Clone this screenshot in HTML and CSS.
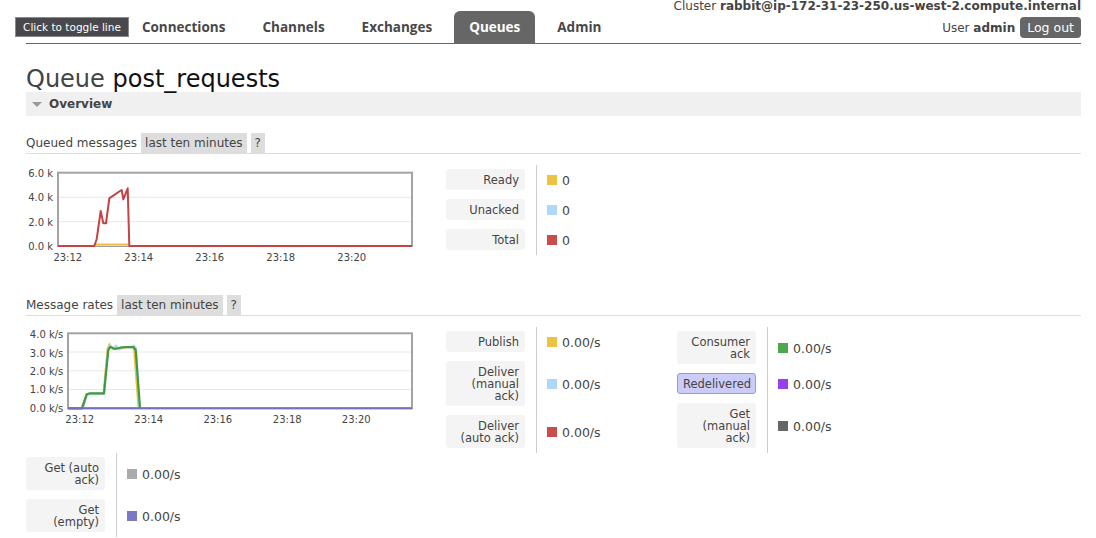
FILE: index.html
```html
<!DOCTYPE html>
<html>
<head>
<meta charset="utf-8">
<title>RabbitMQ Management</title>
<link rel="stylesheet" href="styles.css">
</head>
<body>
<div class="page">
  <header class="top">
    <nav class="tabs">
      <a class="tab covered">Overview</a>
      <a class="tab">Connections</a>
      <a class="tab">Channels</a>
      <a class="tab">Exchanges</a>
      <a class="tab active">Queues</a>
      <a class="tab">Admin</a>
    </nav>
    <div class="login">
      <div class="cluster">Cluster <b>rabbit@ip-172-31-23-250.us-west-2.compute.internal</b></div>
      <div class="user"><span>User <b>admin</b></span><span class="logout">Log out</span></div>
    </div>
  </header>
  <div class="tooltip">Click to toggle line</div>

  <h1 class="title"><span class="kind">Queue</span> <span class="name">post_requests</span></h1>

  <section class="panel">
    <h2 class="toggle"><span class="tri"></span>Overview</h2>

    <div class="subhead"><span>Queued messages</span><span class="pill">last ten minutes</span><span class="pill">?</span></div>
    <div class="chart-row">
      <div class="chart">
        <svg width="420" height="100" viewBox="0 0 420 100">
          <g class="ylab">
            <text x="27" y="11.7">6.0 k</text>
            <text x="27" y="36.2">4.0 k</text>
            <text x="27" y="60.5">2.0 k</text>
            <text x="27" y="85">0.0 k</text>
          </g>
          <line class="grid" x1="32" y1="32.3" x2="386" y2="32.3"/>
          <line class="grid" x1="32" y1="56.7" x2="386" y2="56.7"/>
          <rect class="frame" x="32" y="7.7" width="354" height="73.3"/>
          <polygon class="fill-yellow" points="68,81 70,79 102,79 104,81"/>
          <polyline class="s-yellow" points="32,81 68,81 70,79.5 102,79.5 104,81 386,81"/>
          <polyline class="s-red" points="32,81 68.3,81 70.7,74 74.7,46 77.3,58.3 80,58.3 83.3,33.3 94,26 95.7,25 97.3,34.3 101.7,23.3 103.3,81 386,81"/>
          <g class="xlab">
            <text x="41.8" y="95.7">23:12</text>
            <text x="112.7" y="95.7">23:14</text>
            <text x="183.7" y="95.7">23:16</text>
            <text x="254.7" y="95.7">23:18</text>
            <text x="325.7" y="95.7">23:20</text>
          </g>
        </svg>
      </div>
      <div class="legend">
        <div class="lab"><span class="box">Ready</span></div>
        <div class="val"><i class="sw yellow"></i>0</div>
        <div class="lab"><span class="box">Unacked</span></div>
        <div class="val"><i class="sw blue"></i>0</div>
        <div class="lab"><span class="box">Total</span></div>
        <div class="val"><i class="sw red"></i>0</div>
      </div>
    </div>

    <div class="subhead"><span>Message rates</span><span class="pill">last ten minutes</span><span class="pill">?</span></div>
    <div class="chart-row">
      <div class="chart">
        <svg width="420" height="100" viewBox="0 0 420 100">
          <g class="ylab">
            <text x="37.3" y="11.3">4.0 k/s</text>
            <text x="37.3" y="29.6">3.0 k/s</text>
            <text x="37.3" y="48">2.0 k/s</text>
            <text x="37.3" y="66.3">1.0 k/s</text>
            <text x="37.3" y="84.7">0.0 k/s</text>
          </g>
          <line class="grid" x1="42" y1="25" x2="386" y2="25"/>
          <line class="grid" x1="42" y1="43.8" x2="386" y2="43.8"/>
          <line class="grid" x1="42" y1="62.5" x2="386" y2="62.5"/>
          <rect class="frame" x="42" y="6.3" width="344" height="75"/>
          <polyline class="s-yellow" points="42,81.3 55.5,81.3 60.3,67.8 64,66.8 77.5,66.8 81.5,22 83.5,17 86,20.5 95,21.2 104,20.3 108,21 112.5,81.3"/>
          <polyline class="s-blue" points="57,81.3 61,67.5 78,66.8 82,24 84,18 87,22 90,18.5 93,22.5 98,20 105,21 108,18.5 110,21 113.5,81.3"/>
          <polyline class="s-green" points="42,81.3 56,81.3 60.7,67.3 64,66.3 78,66.3 82.3,23 84,20 89,22 94,20.7 100.7,20 107.3,20 109.7,23 114,81.3"/>
          <line class="s-purple" x1="42" y1="81.3" x2="386" y2="81.3"/>
          <g class="xlab">
            <text x="53.7" y="95.7">23:12</text>
            <text x="122.7" y="95.7">23:14</text>
            <text x="191.8" y="95.7">23:16</text>
            <text x="261.2" y="95.7">23:18</text>
            <text x="330.2" y="95.7">23:20</text>
          </g>
        </svg>
      </div>
      <div class="legend">
        <div class="lab"><span class="box">Publish</span></div>
        <div class="val"><i class="sw yellow"></i>0.00/s</div>
        <div class="lab"><span class="box">Deliver (manual ack)</span></div>
        <div class="val"><i class="sw blue"></i>0.00/s</div>
        <div class="lab"><span class="box">Deliver (auto ack)</span></div>
        <div class="val"><i class="sw red"></i>0.00/s</div>
      </div>
      <div class="legend">
        <div class="lab"><span class="box">Consumer ack</span></div>
        <div class="val"><i class="sw green"></i>0.00/s</div>
        <div class="lab"><span class="box highlight">Redelivered</span></div>
        <div class="val"><i class="sw purple"></i>0.00/s</div>
        <div class="lab"><span class="box">Get (manual ack)</span></div>
        <div class="val"><i class="sw dgrey"></i>0.00/s</div>
      </div>
      <div class="legend">
        <div class="lab"><span class="box">Get (auto ack)</span></div>
        <div class="val"><i class="sw lgrey"></i>0.00/s</div>
        <div class="lab"><span class="box">Get (empty)</span></div>
        <div class="val"><i class="sw indigo"></i>0.00/s</div>
      </div>
    </div>
  </section>
</div>
</body>
</html>
```

FILE: styles.css
```css
html, body {
  margin: 0;
  padding: 0;
  background: #fff;
}
body {
  font-family: "DejaVu Sans", Verdana, sans-serif;
  font-size: 12px;
  color: #444;
}
.page {
  position: relative;
  padding: 0 15px 0 26px;
}

/* header */
.top {
  display: flex;
  height: 43px;
  border-bottom: 1px solid #666;
}
.tabs {
  display: flex;
  align-self: flex-end;
}
.tab {
  display: block;
  padding: 0 15px;
  margin-right: 7px;
  line-height: 32px;
  font-family: "Open Sans", "DejaVu Sans", sans-serif;
  font-weight: 700;
  font-size: 13.5px;
  color: #484848;
  border-radius: 6px 6px 0 0;
}
.tab.covered {
  visibility: hidden;
}
.tab.active {
  background: #666;
  color: #fff;
}
.login {
  margin-left: auto;
  display: flex;
  flex-direction: column;
  align-items: flex-end;
}
.cluster {
  line-height: 13px;
  white-space: nowrap;
}
.user {
  display: flex;
  align-items: center;
  margin-top: 4px;
}
.logout {
  margin-left: 5px;
  background: #666;
  color: #fff;
  border-radius: 4px;
  padding: 0 7px;
  line-height: 21px;
  height: 21px;
  font-size: 12.5px;
}
.tooltip {
  position: absolute;
  left: 15px;
  top: 17px;
  width: 112px;
  height: 18px;
  line-height: 18px;
  text-align: center;
  background: #48484d;
  border: 1px solid #8a8a8e;
  color: #fff;
  font-size: 10.5px;
}

/* title */
.title {
  margin: 22px 0 0;
  font-size: 24px;
  line-height: 26px;
  font-weight: normal;
}
.title .kind { color: #444; }
.title .name { color: #111; }

.toggle {
  margin: 0;
  height: 24px;
  display: flex;
  align-items: center;
  background: #f0f0f0;
  padding-left: 6px;
  font-size: 12px;
  font-weight: bold;
  color: #444;
}
.tri {
  width: 0;
  height: 0;
  border-left: 5.5px solid transparent;
  border-right: 5.5px solid transparent;
  border-top: 5px solid #999;
  margin-right: 7px;
}

.subhead {
  display: flex;
  gap: 4px;
  margin-top: 17px;
  line-height: 20px;
  border-bottom: 1px solid #ddd;
  color: #444;
}
.pill {
  background: #ddd;
  padding: 0 4px;
}

.chart-row {
  display: flex;
  flex-wrap: wrap;
  align-items: flex-start;
  margin-top: 11px;
  padding-bottom: 13px;
}
.chart {
  width: 420px;
  height: 100px;
}
.chart svg { display: block; }
.ylab text {
  text-anchor: end;
  font-size: 10px;
  fill: #444;
  font-family: "DejaVu Sans", Verdana, sans-serif;
}
.xlab text {
  text-anchor: middle;
  font-size: 10px;
  fill: #444;
  font-family: "DejaVu Sans", Verdana, sans-serif;
}
.grid { stroke: #e8e8e8; stroke-width: 1; }
.frame { fill: none; stroke: #a3a3a3; stroke-width: 2; }
polyline, .s-purple { fill: none; stroke-width: 2; stroke-linejoin: round; }
.fill-yellow { fill: #f3e3a8; }
.s-yellow { stroke: #edc240; }
.s-red { stroke: #c44345; }
.s-blue { stroke: #afd8f8; }
.s-green { stroke: #3f9a3f; stroke-width: 2.2; }
.s-purple { stroke: #7570bf; }

/* legend */
.legend {
  width: 231px;
  display: grid;
  grid-template-columns: 90px 1fr;
}
.lab {
  padding: 4px 11px 5px 0;
}
.box {
  display: block;
  background: #f4f4f4;
  border-radius: 3px;
  padding: 4.5px 6px;
  line-height: 12px;
  font-size: 11.5px;
  text-align: right;
  color: #444;
}
.box.highlight {
  background: #ccccfa;
  border: 1px solid #9a9ad0;
  padding: 3.5px 5px;
}
.val {
  border-left: 1px solid #ccc;
  padding-left: 10px;
  display: flex;
  align-items: center;
  font-size: 12.5px;
  color: #444;
}
.sw {
  display: inline-block;
  width: 10px;
  height: 10px;
  margin-right: 5px;
}
.sw.yellow { background: #edc240; }
.sw.blue { background: #afd8f8; }
.sw.red { background: #cb4b4b; }
.sw.green { background: #4da74d; }
.sw.purple { background: #9440ed; }
.sw.dgrey { background: #666; }
.sw.lgrey { background: #aaa; }
.sw.indigo { background: #7c79c3; }
```
